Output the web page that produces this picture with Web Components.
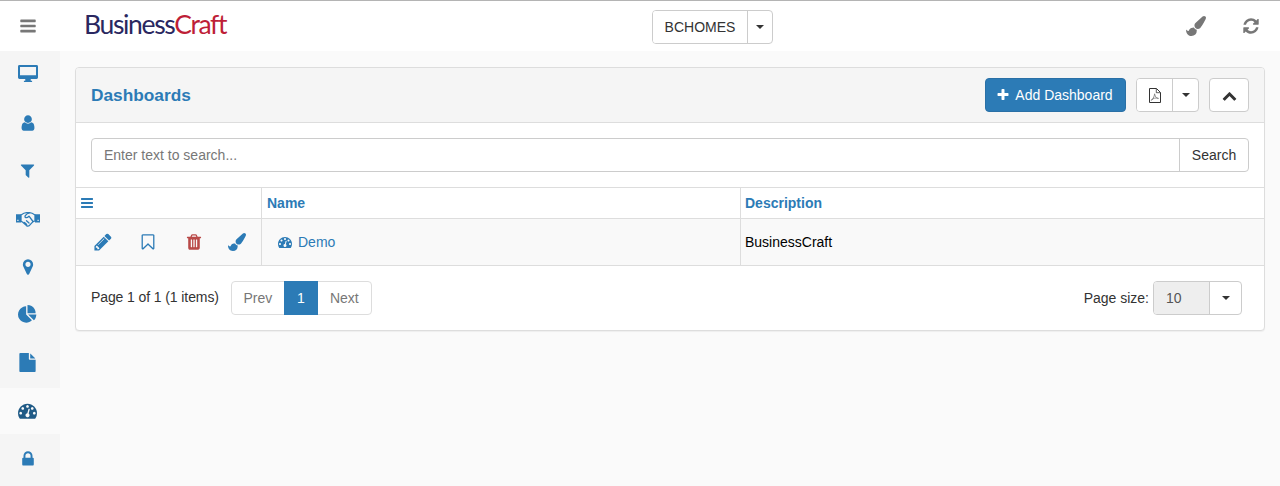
<!DOCTYPE html>
<html>
<head>
<meta charset="utf-8">
<title>Dashboards</title>
<style>
  html, body { margin: 0; height: 100%; }
  body { font-family: "Liberation Sans", Arial, sans-serif; font-size: 14px; color: #333; background: #fafafa; }
</style>
</head>
<body>
<app-shell>
  <top-bar slot="top"></top-bar>
  <side-nav slot="side"></side-nav>
  <data-panel heading="Dashboards"></data-panel>
</app-shell>

<script>
const BLUE = '#2c7bb6';

// icon shapes on a 1792 grid
const ICONS = {
  bars: 'M1664 1344v128q0 26-19 45t-45 19h-1408q-26 0-45-19t-19-45v-128q0-26 19-45t45-19h1408q26 0 45 19t19 45zm0-512v128q0 26-19 45t-45 19h-1408q-26 0-45-19t-19-45v-128q0-26 19-45t45-19h1408q26 0 45 19t19 45zm0-512v128q0 26-19 45t-45 19h-1408q-26 0-45-19t-19-45v-128q0-26 19-45t45-19h1408q26 0 45 19t19 45z',
  user: 'M1536 1399q0 109-62.5 187t-150.5 78h-854q-88 0-150.5-78t-62.5-187q0-85 8.5-160.5t31.5-152 58.5-131 94-89 134.5-34.5q131 128 313 128t313-128q76 0 134.5 34.5t94 89 58.5 131 31.5 152 8.5 160.5zm-256-887q0 159-112.5 271.5t-271.5 112.5-271.5-112.5-112.5-271.5 112.5-271.5 271.5-112.5 271.5 112.5 112.5 271.5z',
  filter: 'M1595 295q17 41-14 70l-493 493v742q0 42-39 59-13 5-25 5-27 0-45-19l-256-256q-19-19-19-45v-486l-493-493q-31-29-14-70 17-39 59-39h1280q42 0 59 39z',
  marker: 'M1152 640q0-106-75-181t-181-75-181 75-75 181 75 181 181 75 181-75 75-181zm256 0q0 109-33 179l-364 774q-16 33-47.5 52t-67.5 19-67.5-19-46.5-52l-365-774q-33-70-33-179 0-212 150-362t362-150 362 150 150 362z',
  pie: 'M768 890l546 546q-106 108-247.5 168t-298.5 60q-209 0-385.5-103t-279.5-279.5-103-385.5 103-385.5 279.5-279.5 385.5-103v762zm187 6h773q0 157-60 298.5t-168 247.5zm709-128h-768v-768q209 0 385.5 103t279.5 279.5 103 385.5z',
  file: 'M1152 512v-472q22 14 36 28l408 408q14 14 28 36h-472zm-128 32q0 40 28 68t68 28h544v1056q0 40-28 68t-68 28h-1344q-40 0-68-28t-28-68v-1600q0-40 28-68t68-28h800v544z',
  dashboard: 'M384 1152q0-53-37.5-90.5t-90.5-37.5-90.5 37.5-37.5 90.5 37.5 90.5 90.5 37.5 90.5-37.5 37.5-90.5zm192-448q0-53-37.5-90.5t-90.5-37.5-90.5 37.5-37.5 90.5 37.5 90.5 90.5 37.5 90.5-37.5 37.5-90.5zm428 481l101-382q6-26-7.5-48.5t-38.5-29.5-48 6.5-30 39.5l-101 382q-60 5-107 43.5t-63 98.5q-20 77 20 146t117 89 146-20 89-117q16-60-6-117t-72-91zm660-33q0-53-37.5-90.5t-90.5-37.5-90.5 37.5-37.5 90.5 37.5 90.5 90.5 37.5 90.5-37.5 37.5-90.5zm-640-640q0-53-37.5-90.5t-90.5-37.5-90.5 37.5-37.5 90.5 37.5 90.5 90.5 37.5 90.5-37.5 37.5-90.5zm448 192q0-53-37.5-90.5t-90.5-37.5-90.5 37.5-37.5 90.5 37.5 90.5 90.5 37.5 90.5-37.5 37.5-90.5zm320 448q0 261-141 483-19 29-54 29h-1402q-35 0-54-29-141-221-141-483 0-182 71-348t191-286 286-191 348-71 348 71 286 191 191 286 71 348z',
  lock: 'M640 768h512v-192q0-106-75-181t-181-75-181 75-75 181v192zm832 96v576q0 40-28 68t-68 28h-960q-40 0-68-28t-28-68v-576q0-40 28-68t68-28h32v-192q0-184 132-316t316-132 316 132 132 316v192h32q40 0 68 28t28 68z',
  pencil: 'M491 1536l91-91-235-235-91 91v107h128v128h107zm523-928q0-22-22-22-10 0-17 7l-542 542q-7 7-7 17 0 22 22 22 10 0 17-7l542-542q7-7 7-17zm-54-192l416 416-832 832h-416v-416zm683 96q0 53-37 90l-166 166-416-416 166-165q36-38 90-38 53 0 91 38l235 234q37 39 37 91z',
  bookmark: 'M1408 256h-1024v1241l424-407 88-85 88 85 424 407v-1241zm12-128q23 0 44 9 33 13 52.5 41t19.5 62v1289q0 34-19.5 62t-52.5 41q-19 8-44 8-48 0-83-32l-441-424-441 424q-36 33-83 33-23 0-44-9-33-13-52.5-41t-19.5-62v-1289q0-34 19.5-62t52.5-41q21-9 44-9h1048z',
  trash: 'M704 1376v-704q0-14-9-23t-23-9h-64q-14 0-23 9t-9 23v704q0 14 9 23t23 9h64q14 0 23-9t9-23zm256 0v-704q0-14-9-23t-23-9h-64q-14 0-23 9t-9 23v704q0 14 9 23t23 9h64q14 0 23-9t9-23zm256 0v-704q0-14-9-23t-23-9h-64q-14 0-23 9t-9 23v704q0 14 9 23t23 9h64q14 0 23-9t9-23zm-544-992h448l-48-117q-7-9-17-11h-317q-10 2-17 11zm928 32v64q0 14-9 23t-23 9h-96v948q0 83-47 143.5t-113 60.5h-832q-66 0-113-58.5t-47-141.5v-952h-96q-14 0-23-9t-9-23v-64q0-14 9-23t23-9h309l70-167q15-37 54-63t79-26h320q40 0 79 26t54 63l70 167h309q14 0 23 9t9 23z',
  brush: 'M1615 0q70 0 122.5 46.5t52.5 116.5q0 63-45 151-332 629-465 752-97 91-218 91-126 0-216.5-92.5t-90.5-219.5q0-128 92-212l638-579q59-54 130-54zm-909 1034q39 76 106.5 130t150.5 76l1 71q4 213-129.5 347t-348.5 134q-123 0-218-46.5t-152.5-127.5-86.5-183-29-220q7 5 41 30t62 44.5 59 36.5 46 17q41 0 55-37 25-66 57.5-112.5t69.5-76 88-47.5 103-25.5 125-10.5z',
  refresh: 'M1639 1056q0 5-1 7-64 268-268 434.5t-478 166.5q-146 0-282.5-55t-243.5-157l-129 129q-19 19-45 19t-45-19-19-45v-448q0-26 19-45t45-19h448q26 0 45 19t19 45-19 45l-137 137q71 66 161 102t187 36q134 0 250-65t186-179q11-17 53-117 8-23 30-23h192q13 0 22.5 9.5t9.5 22.5zm25-800v448q0 26-19 45t-45 19h-448q-26 0-45-19t-19-45 19-45l138-138q-148-137-349-137-134 0-250 65t-186 179q-11 17-53 117-8 23-30 23h-199q-13 0-22.5-9.5t-9.5-22.5v-7q65-268 270-434.5t480-166.5q146 0 284 55.5t245 156.5l130-129q19-19 45-19t45 19 19 45z',
  plus: 'M1600 736v192q0 40-28 68t-68 28h-416v416q0 40-28 68t-68 28h-192q-40 0-68-28t-28-68v-416h-416q-40 0-68-28t-28-68v-192q0-40 28-68t68-28h416v-416q0-40 28-68t68-28h192q40 0 68 28t28 68v416h416q40 0 68 28t28 68z',
  chevron: 'M1683 1331l-166 165q-19 19-45 19t-45-19l-531-531-531 531q-19 19-45 19t-45-19l-166-165q-19-19-19-45.5t19-45.5l742-741q19-19 45-19t45 19l742 741q19 19 19 45.5t-19 45.5z'
};

// these ones are drawn by hand, with their own viewBox
const ICON_MARKUP = {
  desktop: {
    box: '0 0 1792 1792',
    svg: `<path fill="currentColor" fill-rule="evenodd" d="M130 0H1662Q1792 0 1792 130V1130Q1792 1260 1662 1260H1142V1400H1262V1523H530V1400H650V1260H130Q0 1260 0 1130V130Q0 0 130 0ZM180 170V920H1612V170Z"/>`
  },
  handshake: {
    box: '0 0 24 16',
    svg: `<path fill="currentColor" d="M0 3.2h5v8.4H0zM19 3.2h5v8.4h-5z"/>
      <g fill="none" stroke="currentColor" stroke-width="1.3" stroke-linejoin="round" stroke-linecap="round">
        <path d="M5 4 Q8 1.6 10.500 1.600 L13.500 1.600 Q16 1.600 19 4 V10 L17 10.600 L13.500 14.400 Q12 15.600 10.500 14.600 L6.500 11 L5 10.300 Z"/>
        <path d="M13.500 1.800 Q11 2 9.300 4.600 Q8.500 6.300 10 6.700 Q11.500 6.800 13 5.200 L17 10.500"/>
        <path d="M8.500 11.400 L10.700 13.400 M10.500 9.800 L13 12"/>
      </g>
      <path fill="#f5f5f5" d="M1.300 8.800h1.200v1.200H1.300zM21.500 8.800h1.200v1.200h-1.200z"/>`
  },
  pdf: {
    box: '0 0 12 15',
    svg: `<g fill="none" stroke="currentColor" stroke-linejoin="round">
        <path stroke-width="1" d="M.5.500H7.500L11.500 4.500V14.500H.5Z"/>
        <path stroke-width=".8" d="M7.300.700V4.700H11.300"/>
        <path stroke="#777" stroke-width=".8" d="M5.600 5.800 Q5.500 8 4.200 10.200 Q2.800 12.800 2.200 12.300 Q2.200 11.100 5.600 10.200 Q8.800 9.500 9.500 10.400 Q9.300 11.200 7.500 9.800 Q5.900 8.300 5.600 5.800Z"/>
      </g>`
  }
};

class FaIcon extends HTMLElement {
  constructor() {
    super();
    const name = this.getAttribute('name');
    const size = Number(this.getAttribute('size') || 16);
    const custom = ICON_MARKUP[name];
    const box = custom ? custom.box : '0 0 1792 1792';
    const inner = custom ? custom.svg : `<path fill="currentColor" d="${ICONS[name]}"/>`;
    const [, , w, h] = box.split(' ').map(Number);
    this.attachShadow({ mode: 'open' }).innerHTML = `
      <style>
        :host { display: inline-flex; line-height: 0; }
        svg { display: block; overflow: visible; }
      </style>
      <svg width="${size}" height="${size * h / w}" viewBox="${box}">${inner}</svg>`;
  }
}

const caretStyle = `
  .caret { width: 0; height: 0; border-top: 4px solid #333; border-left: 4px solid transparent; border-right: 4px solid transparent; }
`;

// button with a separate caret part, used in the top bar, the export menu and page size
class SplitButton extends HTMLElement {
  constructor() {
    super();
    this.attachShadow({ mode: 'open' }).innerHTML = `
      <style>
        :host { display: inline-flex; height: 34px; box-sizing: border-box; border: 1px solid #ccc; border-radius: 4px; background: #fff; color: #333; font-size: 14px; overflow: hidden; }
        .main { display: flex; align-items: center; justify-content: center; width: var(--main-width, auto); padding: var(--main-padding, 0 12px); border-right: 1px solid #ccc; background: var(--main-bg, #fff); box-sizing: border-box; }
        .toggle { display: flex; align-items: center; justify-content: center; width: var(--toggle-width, 24px); }
        ${caretStyle}
      </style>
      <div class="main"><slot></slot></div>
      <div class="toggle"><div class="caret"></div></div>`;
  }
}

class TopBar extends HTMLElement {
  constructor() {
    super();
    this.attachShadow({ mode: 'open' }).innerHTML = `
      <style>
        :host { display: grid; grid-template-columns: 652px auto 1fr; align-items: center; height: 51px; box-sizing: border-box; padding-top: 1px; background: #fff; border-top: 1px solid #b4b4b4; }
        .left { display: flex; align-items: center; }
        .burger { width: 56px; display: flex; justify-content: center; color: #777; margin-top: -2px; }
        .logo { margin-left: 28px; font-family: Lato, sans-serif; font-size: 26.5px; letter-spacing: -1.35px; color: #2a2760; line-height: 1; padding-bottom: 4px; }
        .logo span { color: #be1e37; }
        .right { display: flex; justify-content: flex-end; align-items: center; gap: 36px; padding-right: 20px; color: #777; margin-top: -2px; }
        split-button { --toggle-width: 24px; --main-width: 95px; --main-padding: 0; }
      </style>
      <div class="left">
        <div class="burger"><fa-icon name="bars" size="18"></fa-icon></div>
        <div class="logo">Business<span>Craft</span></div>
      </div>
      <split-button>BCHOMES</split-button>
      <div class="right">
        <fa-icon name="brush" size="20"></fa-icon>
        <fa-icon name="refresh" size="18"></fa-icon>
      </div>`;
  }
}

class NavItem extends HTMLElement {
  constructor() {
    super();
    this.attachShadow({ mode: 'open' }).innerHTML = `
      <style>
        :host { display: flex; align-items: center; justify-content: center; height: 48px; padding: 0 5px 1px 0; box-sizing: border-box; color: ${BLUE}; }
        :host([active]) { height: 46px; margin: 1px 0; background: #fafafa; color: #1f5a86; }
      </style>
      <slot></slot>`;
  }
}

class SideNav extends HTMLElement {
  constructor() {
    super();
    const items = [['desktop', 20], ['user', 18], ['filter', 17], ['handshake', 24], ['marker', 18], ['pie', 19], ['file', 19], ['dashboard', 19, true], ['lock', 18]];
    this.attachShadow({ mode: 'open' }).innerHTML = `
      <style>
        :host { display: block; width: 60px; background: #f5f5f5; }
      </style>
      ${items.map(([n, s, a]) => `<nav-item ${a ? 'active' : ''}><fa-icon name="${n}" size="${s}"></fa-icon></nav-item>`).join('')}`;
  }
}

class SearchBox extends HTMLElement {
  constructor() {
    super();
    this.attachShadow({ mode: 'open' }).innerHTML = `
      <style>
        :host { display: flex; height: 34px; box-sizing: border-box; border: 1px solid #ccc; border-radius: 4px; background: #fff; }
        .field { flex: 1; padding-left: 12px; display: flex; align-items: center; color: #777; }
        .btn { width: 68px; display: flex; align-items: center; justify-content: center; border-left: 1px solid #ccc; color: #333; }
      </style>
      <div class="field">Enter text to search...</div>
      <div class="btn">Search</div>`;
  }
}

class PageBar extends HTMLElement {
  constructor() {
    super();
    this.attachShadow({ mode: 'open' }).innerHTML = `
      <style>
        :host { display: flex; align-items: center; padding: 15px 22px 15px 15px; }
        .count { margin-right: 12px; color: #333; letter-spacing: -.1px; position: relative; top: -1px; }
        .pager { display: flex; height: 34px; box-sizing: border-box; border: 1px solid #ddd; border-radius: 4px; background: #fff; color: #777; }
        .pager div { display: flex; align-items: center; justify-content: center; }
        .prev { width: 52px; }
        .cur { width: 34px; margin: -1px 0; background: ${BLUE}; color: #fff; }
        .next { width: 53px; }
        .spacer { flex: 1; }
        .size { margin-right: 4px; color: #333; }
        split-button { --main-width: 56px; --main-bg: #eee; --main-padding: 0 0 0 12px; --toggle-width: 31px; }
        .val { width: 100%; color: #555; }
      </style>
      <div class="count">Page 1 of 1 (1 items)</div>
      <div class="pager"><div class="prev">Prev</div><div class="cur">1</div><div class="next">Next</div></div>
      <div class="spacer"></div>
      <div class="size">Page size:</div>
      <split-button><span class="val">10</span></split-button>`;
  }
}

class DashboardGrid extends HTMLElement {
  constructor() {
    super();
    this.attachShadow({ mode: 'open' }).innerHTML = `
      <style>
        :host { display: grid; grid-template-columns: 185px 479px 1fr; border-top: 1px solid #ddd; border-bottom: 1px solid #ddd; }
        .c { display: flex; align-items: center; box-sizing: border-box; padding-left: 5px; border-left: 1px solid #ddd; }
        .c.first { border-left: 0; }
        .c.last { padding-left: 4px; }
        .h { color: ${BLUE}; font-weight: bold; border-bottom: 1px solid #ddd; height: 31px; }
        .h.first { padding-left: 4px; }
        .r { height: 46px; background: #f9f9f9; color: #000; }
        .actions { padding-left: 0; color: ${BLUE}; }
        .actions span { width: 45.5px; display: flex; justify-content: center; }
        .actions span.last { width: 40px; }
        .actions .del { color: #b94a48; }
        .name { padding-left: 16px; gap: 6px; color: ${BLUE}; }
      </style>
      <div class="c h first"><fa-icon name="bars" size="14"></fa-icon></div>
      <div class="c h">Name</div>
      <div class="c h last">Description</div>
      <div class="c r first actions">
        <span style="margin-left:4px"><fa-icon name="pencil" size="20"></fa-icon></span>
        <span><fa-icon name="bookmark" size="18"></fa-icon></span>
        <span class="del"><fa-icon name="trash" size="18"></fa-icon></span>
        <span class="last"><fa-icon name="brush" size="18"></fa-icon></span>
      </div>
      <div class="c r name"><fa-icon name="dashboard" size="14"></fa-icon>Demo</div>
      <div class="c r last">BusinessCraft</div>`;
  }
}

class DataPanel extends HTMLElement {
  constructor() {
    super();
    this.attachShadow({ mode: 'open' }).innerHTML = `
      <style>
        :host { display: block; background: #fff; border: 1px solid #ddd; border-radius: 4px; box-shadow: 0 1px 1px rgba(0,0,0,.05); overflow: hidden; }
        .head { display: flex; align-items: center; gap: 10px; height: 55px; box-sizing: border-box; padding: 0 15px; background: #f5f5f5; border-bottom: 1px solid #ddd; }
        h3 { margin: 0; flex: 1; padding-top: 1px; font-size: 17.3px; font-weight: bold; color: ${BLUE}; }
        .btn { display: flex; align-items: center; justify-content: center; height: 34px; box-sizing: border-box; border: 1px solid #ccc; border-radius: 4px; background: #fff; color: #333; }
        .add { width: 141px; gap: 5px; padding-right: 2px; background: ${BLUE}; border-color: #2a70a6; color: #fff; }
        .up { width: 40px; }
        split-button { --main-width: 36px; --main-padding: 0; --toggle-width: 25px; }
        .search { padding: 15px; }
      </style>
      <div class="head">
        <h3>${this.getAttribute('heading')}</h3>
        <div class="btn add"><fa-icon name="plus" size="14"></fa-icon>Add Dashboard</div>
        <split-button><fa-icon name="pdf" size="12"></fa-icon></split-button>
        <div class="btn up"><fa-icon name="chevron" size="15"></fa-icon></div>
      </div>
      <div class="search"><search-box></search-box></div>
      <dashboard-grid></dashboard-grid>
      <page-bar></page-bar>`;
  }
}

class AppShell extends HTMLElement {
  constructor() {
    super();
    this.attachShadow({ mode: 'open' }).innerHTML = `
      <style>
        :host { display: grid; grid-template-columns: 60px 1fr; grid-template-rows: 51px 1fr; height: 486px; overflow: hidden; }
        .top { grid-column: 1 / 3; }
        .main { padding: 16px 15px 0; }
        .side { display: flex; background: #f5f5f5; }
      </style>
      <div class="top"><slot name="top"></slot></div>
      <div class="side"><slot name="side"></slot></div>
      <div class="main"><slot></slot></div>`;
  }
}

customElements.define('fa-icon', FaIcon);
customElements.define('split-button', SplitButton);
customElements.define('top-bar', TopBar);
customElements.define('nav-item', NavItem);
customElements.define('side-nav', SideNav);
customElements.define('search-box', SearchBox);
customElements.define('page-bar', PageBar);
customElements.define('dashboard-grid', DashboardGrid);
customElements.define('data-panel', DataPanel);
customElements.define('app-shell', AppShell);
</script>
</body>
</html>
